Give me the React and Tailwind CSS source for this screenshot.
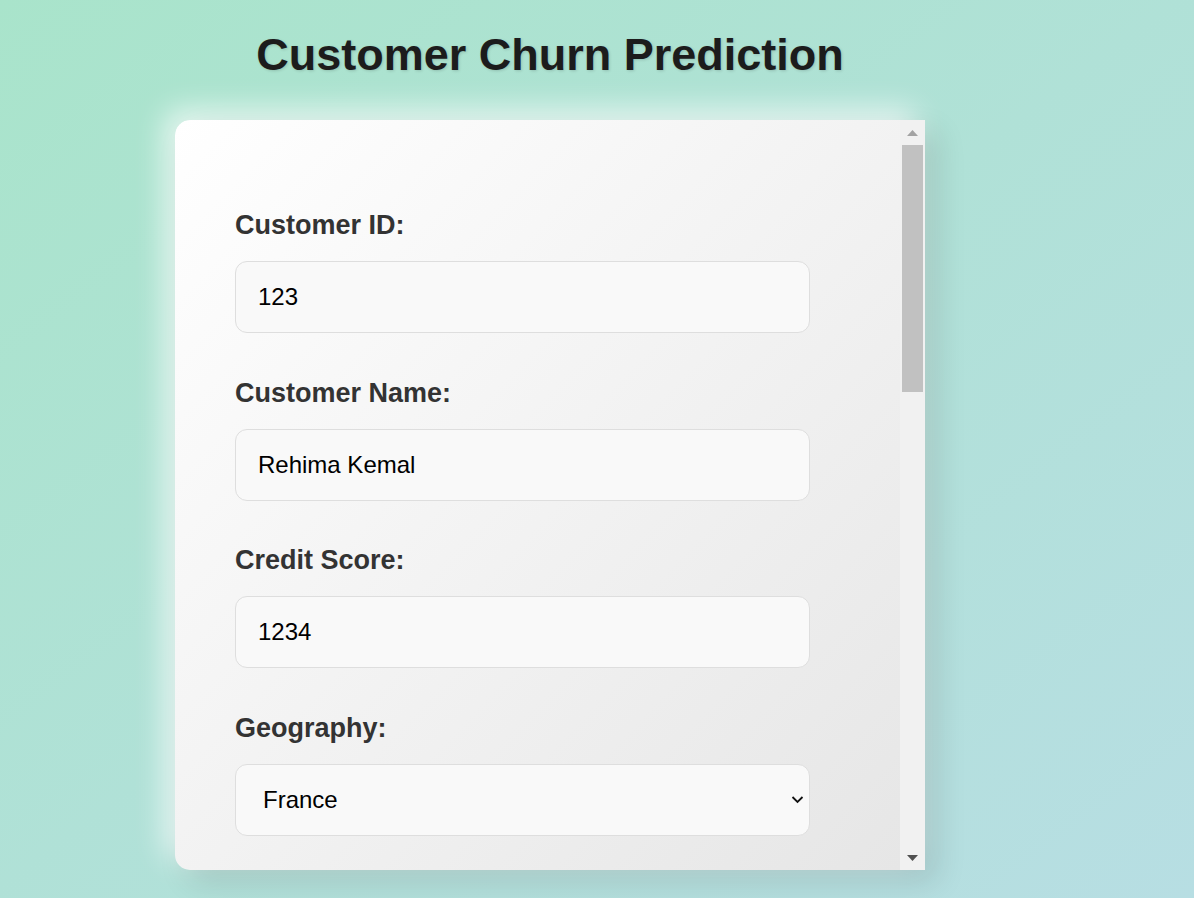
import React, { useState } from 'react';

const fields = [
  { id: 'customerId', label: 'Customer ID:' },
  { id: 'customerName', label: 'Customer Name:' },
  { id: 'creditScore', label: 'Credit Score:' },
];

function Field({ label, value, onChange }) {
  return (
    <div className="mb-[46.7px]">
      <label className="block text-[27px] leading-none font-bold text-[#333] mb-[22px]">{label}</label>
      <input
        type="text"
        value={value}
        onChange={onChange}
        className="block w-[575px] h-[72px] px-[22px] text-[24px] text-black bg-[#f9f9f9] border-[1.5px] border-[#dedede] rounded-[12px] outline-none"
      />
    </div>
  );
}

export default function App() {
  const [form, setForm] = useState({ customerId: '123', customerName: 'Rehima Kemal', creditScore: '1234', geography: 'France' });

  const update = (key) => (e) => setForm({ ...form, [key]: e.target.value });

  return (
    <div className="min-h-screen w-full bg-gradient-to-br from-[#a9e4cb] to-[#b7dee3] font-['Liberation_Sans',Arial,sans-serif] overflow-hidden">
      <div className="w-[750px] ml-[175px] pt-[32px]">
        <h1 className="text-[45px] leading-none font-bold text-[#1c1c1c] text-center mb-[43px] [text-shadow:1px_1px_3px_rgba(0,0,0,0.15)]">
          Customer Churn Prediction
        </h1>

        {/* form card with scrollbar */}
        <div className="flex h-[750px] rounded-l-[15px] shadow-[12px_12px_30px_rgba(0,0,0,0.12),-10px_-10px_30px_rgba(255,255,255,0.75)]">
          <div className="flex-1 overflow-hidden rounded-l-[15px] bg-gradient-to-br from-[#ffffff] to-[#e6e6e6] pt-[92px] pl-[60px]">
            {fields.map((f) => (
              <Field key={f.id} label={f.label} value={form[f.id]} onChange={update(f.id)} />
            ))}

            {/* Geography select */}
            <div>
              <label className="block text-[27px] leading-none font-bold text-[#333] mb-[22px]">Geography:</label>
              <div className="relative w-[575px]">
                <select
                  value={form.geography}
                  onChange={update('geography')}
                  className="block w-full h-[72px] pl-[27px] pr-[40px] text-[24px] text-black bg-[#f9f9f9] border-[1.5px] border-[#dedede] rounded-[12px] outline-none appearance-none"
                >
                  <option>France</option>
                  <option>Germany</option>
                  <option>Spain</option>
                </select>
                <svg className="absolute right-[6px] top-[30px] pointer-events-none" width="13" height="12" viewBox="0 0 13 12">
                  <path d="M1.5 3 L6.5 8 L11.5 3" fill="none" stroke="#111" strokeWidth="1.8" />
                </svg>
              </div>
            </div>
          </div>

          {/* scrollbar */}
          <div className="w-[25px] bg-[#f1f1f1] flex flex-col">
            <div className="h-[25px] flex items-center justify-center">
              <svg width="11" height="6" viewBox="0 0 11 6"><path d="M5.5 0 L11 6 L0 6 Z" fill="#a3a3a3" /></svg>
            </div>
            <div className="h-[247px] mx-[2px] bg-[#c1c1c1]" />
            <div className="flex-1" />
            <div className="h-[25px] flex items-center justify-center">
              <svg width="11" height="6" viewBox="0 0 11 6"><path d="M0 0 L11 0 L5.5 6 Z" fill="#505050" /></svg>
            </div>
          </div>
        </div>
      </div>
    </div>
  );
}
